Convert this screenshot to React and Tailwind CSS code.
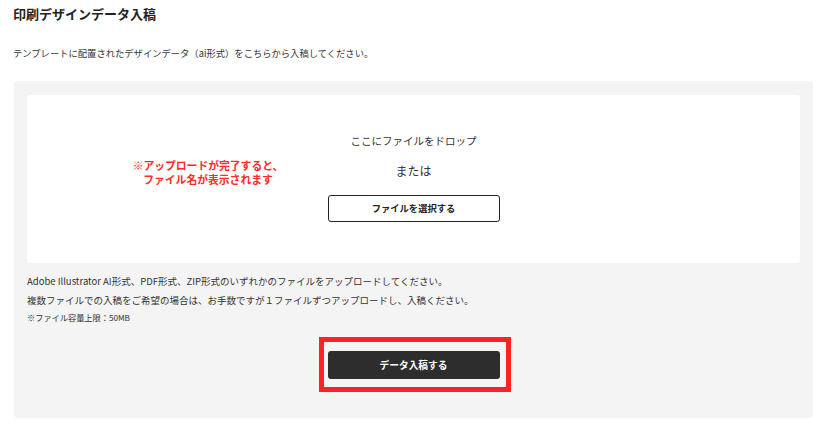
export default function App() {
  return (
    <div className="w-[818px] h-[442px] bg-white text-[#333] font-['Noto_Sans_CJK_JP','Noto_Sans',sans-serif]">
      <div className="px-[13px] pt-[5px]">
        <h1 className="text-[13px] leading-[17px] font-bold text-[#222]">
          印刷デザインデータ入稿
        </h1>
        <p className="mt-[24px] text-[9.3px] leading-[14px]">
          テンプレートに配置されたデザインデータ（ai形式）をこちらから入稿してください。
        </p>
      </div>

      {/* upload panel */}
      <div className="mt-[21px] ml-[14px] w-[799px] bg-[#f4f4f4] rounded-[4px] px-[13px] pt-[14px] pb-[39px]">
        <div className="relative h-[168px] bg-white rounded-[3px] flex flex-col items-center pt-[38px]">
          <div className="absolute left-0 top-[63px] w-[362px] text-center text-[10.8px] leading-[14px] font-bold text-[#ff2a2a]">
            <p>※アップロードが完了すると、</p>
            <p>ファイル名が表示されます</p>
          </div>
          <p className="text-[10.5px] leading-[16px]">ここにファイルをドロップ</p>
          <p className="mt-[14px] text-[12px] leading-[16px]">または</p>
          <button className="mt-[16px] w-[172px] h-[27px] border border-[#222] rounded-[3px] bg-white text-[9.3px] font-bold text-[#222]">
            ファイルを選択する
          </button>
        </div>

        <div className="mt-[9px] text-[9.5px] leading-[19px]">
          <p>Adobe Illustrator AI形式、PDF形式、ZIP形式のいずれかのファイルをアップロードしてください。</p>
          <p>複数ファイルでの入稿をご希望の場合は、お手数ですが１ファイルずつアップロードし、入稿ください。</p>
          <p className="text-[8.2px] leading-[14px]">※ファイル容量上限：50MB</p>
        </div>

        <div className="mt-[26px] flex justify-center">
          <div className="relative">
            <button className="w-[172px] h-[28px] bg-[#2d2d2d] rounded-[3px] text-white text-[9.7px] font-bold">
              データ入稿する
            </button>
            <div className="absolute -left-[9px] -top-[13px] -right-[11px] -bottom-[13px] border-[5px] border-[#ff2222] pointer-events-none" />
          </div>
        </div>
      </div>
    </div>
  );
}
